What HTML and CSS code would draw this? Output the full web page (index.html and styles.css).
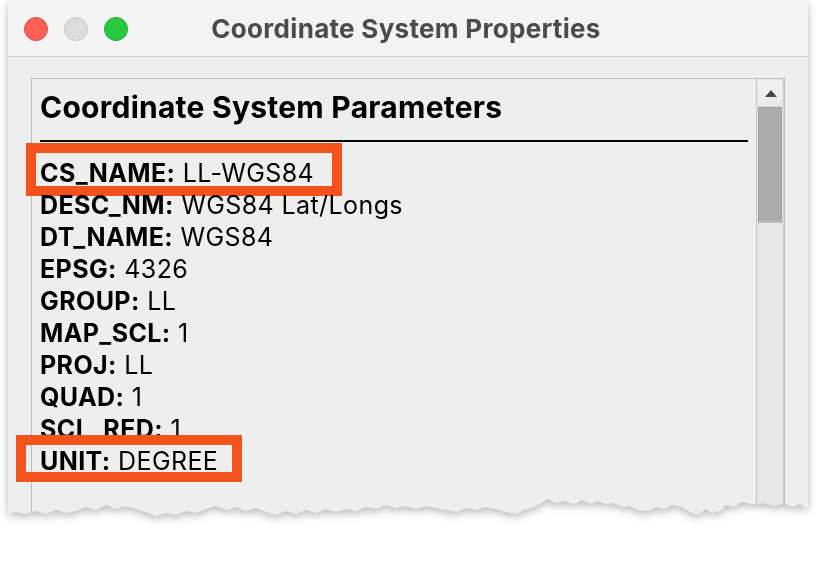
FILE: index.html
```html
<!DOCTYPE html>
<html lang="en">
<head>
  <meta charset="UTF-8"/>
  <title>Coordinate System Properties</title>
  <link rel="stylesheet" href="styles.css">
</head>
<body>
  <div class="shot">
    <div class="window">
      <header class="titlebar">
        <div class="lights">
          <span class="light close"></span>
          <span class="light min"></span>
          <span class="light max"></span>
        </div>
        <div class="title">Coordinate System Properties</div>
        <div></div>
      </header>
      <div class="pane">
        <div class="panel">
          <div class="doc">
            <h1>Coordinate System Parameters</h1>
            <ul class="params">
              <li><span class="param hl hl-name"><b>CS_NAME:</b> LL-WGS84</span></li>
              <li><span class="param"><b>DESC_NM:</b> WGS84 Lat/Longs</span></li>
              <li><span class="param"><b>DT_NAME:</b> WGS84</span></li>
              <li><span class="param"><b>EPSG:</b> 4326</span></li>
              <li><span class="param"><b>GROUP:</b> LL</span></li>
              <li><span class="param"><b>MAP_SCL:</b> 1</span></li>
              <li><span class="param"><b>PROJ:</b> LL</span></li>
              <li><span class="param"><b>QUAD:</b> 1</span></li>
              <li><span class="param"><b>SCL_RED:</b> 1</span></li>
              <li><span class="param hl hl-unit"><b>UNIT:</b> DEGREE</span></li>
            </ul>
          </div>
          <div class="scrollbar">
            <div class="arrow"></div>
            <div class="thumb"></div>
          </div>
        </div>
      </div>
    </div>
  </div>
</body>
</html>
```

FILE: styles.css
```css
* { box-sizing: border-box; margin:0; padding:0 }
body {
  background:#fff;
  font-family:'Inter','Liberation Sans',sans-serif;
  color:#000;
}
.shot {
  padding:1px 8px 0;
  filter: drop-shadow(0 3px 4px rgba(0,0,0,0.28));
}
.window {
  width:800px; height:540px;
  background:#eeeeee;
  border-radius:12px 12px 0 0;
  display:flex; flex-direction:column;
  clip-path: polygon(-20px -20px, 820px -20px, 820px 506px, 800px 508px, 792px 503px, 784px 506px, 776px 502px, 766px 505px, 756px 502px, 744px 503px, 734px 501px, 726px 506px, 718px 504px, 712px 510px, 704px 512px, 698px 508px, 690px 514px, 682px 511px, 674px 506px, 664px 504px, 656px 508px, 648px 506px, 640px 510px, 630px 509px, 622px 505px, 614px 506px, 606px 502px, 598px 503px, 590px 500px, 582px 503px, 574px 499px, 566px 503px, 556px 500px, 548px 502px, 540px 498px, 532px 503px, 524px 507px, 516px 509px, 508px 513px, 498px 511px, 488px 508px, 478px 506px, 468px 509px, 458px 507px, 448px 511px, 438px 509px, 428px 507px, 418px 505px, 408px 508px, 398px 505px, 388px 507px, 378px 504px, 368px 508px, 358px 506px, 348px 510px, 338px 508px, 328px 511px, 318px 508px, 308px 512px, 298px 509px, 288px 513px, 278px 510px, 268px 514px, 258px 511px, 248px 507px, 238px 510px, 228px 506px, 218px 509px, 208px 505px, 198px 508px, 188px 512px, 178px 510px, 168px 514px, 158px 512px, 148px 515px, 138px 511px, 128px 508px, 118px 505px, 108px 508px, 98px 504px, 88px 509px, 78px 506px, 68px 510px, 58px 512px, 48px 509px, 38px 513px, 28px 510px, 18px 513px, 8px 511px, 0px 512px, -20px 512px);
}

/* title bar */
.titlebar {
  height:56px;
  background:#f3f3f3;
  border-bottom:1px solid #d4d4d4;
  display:grid; grid-template-columns:1fr auto 1fr;
  align-items:center;
  padding:0 16px;
}
.lights { display:flex; gap:16px; }
.light {
  width:24px; height:24px;
  border-radius:50%;
  border:1px solid rgba(0,0,0,0.12);
}
.close { background:#fe5f57; border-color:#e14a43; }
.min   { background:#dcdcdc; border-color:#c6c6c6; }
.max   { background:#28c840; border-color:#1fae34; }
.title {
  font-size:26px; font-weight:700;
  color:#4b4b4b;
  letter-spacing:0.3px;
  padding-right:4px;
}

/* content */
.pane {
  flex:1;
  display:flex;
  padding:21px 23px 0;
}
.panel {
  flex:1;
  display:flex;
  border:1px solid #bcbcbc;
  border-bottom:none;
}
.doc {
  flex:1;
  padding:12px 8px 0;
}
h1 {
  font-size:30px; font-weight:700;
  line-height:32px;
  padding-bottom:17px;
  border-bottom:2px solid #000;
  margin-bottom:15px;
  letter-spacing:0.25px;
}
.params { list-style:none; }
.params li {
  font-size:25px;
  line-height:32px;
  letter-spacing:0.4px;
}
.param { position:relative; display:inline-block; }
.param b { font-weight:700; }
.hl::after {
  content:'';
  box-sizing:border-box;
  position:absolute;
  border:10px solid #f4521b;
}
.hl-name::after { left:-14px; top:-14px; bottom:-7px; width:316px; }
.hl-unit::after { left:-24px; top:-10px; bottom:-5px; width:226px; }

/* scrollbar */
.scrollbar {
  width:28px;
  background:#e7e7e7;
  border-left:1px solid #c4c4c4;
  border-right:1px solid #cdcdcd;
  padding:1px 1px 0;
}
.arrow {
  height:27px;
  background:linear-gradient(#f2f2f2,#e9e9e9);
  border-bottom:1px solid #d8d8d8;
  position:relative;
}
.arrow::after {
  content:'';
  position:absolute;
  left:7px; top:10px;
  border-left:6px solid transparent;
  border-right:6px solid transparent;
  border-bottom:7px solid #474747;
}
.thumb {
  height:116px;
  background:#ababab;
  border:1px solid #a2a2a2;
  border-bottom:2px solid #b8b8b8;
}
```
